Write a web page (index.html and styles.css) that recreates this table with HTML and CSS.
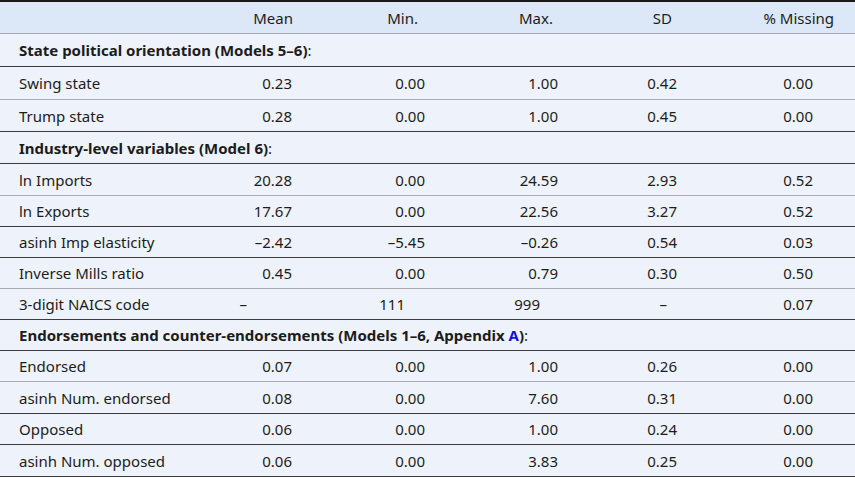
FILE: index.html
```html
<!DOCTYPE html>
<html>
<head>
<meta charset="utf-8">
<link rel="stylesheet" href="styles.css">
</head>
<body>
<div class="table">
  <div class="row head h32 gray">
    <div class="cell label"></div>
    <div class="cell hm">Mean</div>
    <div class="cell hmin">Min.</div>
    <div class="cell hmax">Max.</div>
    <div class="cell hsd">SD</div>
    <div class="cell hmiss">% Missing</div>
  </div>
  <div class="row group h33 dark">
    <div class="cell label span"><b>State political orientation (Models 5–6)</b>:</div>
  </div>
  <div class="row h33 gray">
    <div class="cell label">Swing state</div>
    <div class="cell m">0.23</div><div class="cell mn">0.00</div><div class="cell mx">1.00</div><div class="cell sd">0.42</div><div class="cell ms">0.00</div>
  </div>
  <div class="row h32 dark">
    <div class="cell label">Trump state</div>
    <div class="cell m">0.28</div><div class="cell mn">0.00</div><div class="cell mx">1.00</div><div class="cell sd">0.45</div><div class="cell ms">0.00</div>
  </div>
  <div class="row group h32 dark">
    <div class="cell label span"><b>Industry-level variables (Model 6)</b>:</div>
  </div>
  <div class="row h32 gray">
    <div class="cell label">ln Imports</div>
    <div class="cell m">20.28</div><div class="cell mn">0.00</div><div class="cell mx">24.59</div><div class="cell sd">2.93</div><div class="cell ms">0.52</div>
  </div>
  <div class="row h31 dark">
    <div class="cell label">ln Exports</div>
    <div class="cell m">17.67</div><div class="cell mn">0.00</div><div class="cell mx">22.56</div><div class="cell sd">3.27</div><div class="cell ms">0.52</div>
  </div>
  <div class="row h31 dark">
    <div class="cell label">asinh Imp elasticity</div>
    <div class="cell m">–2.42</div><div class="cell mn">–5.45</div><div class="cell mx">–0.26</div><div class="cell sd">0.54</div><div class="cell ms">0.03</div>
  </div>
  <div class="row h31 gray">
    <div class="cell label">Inverse Mills ratio</div>
    <div class="cell m">0.45</div><div class="cell mn">0.00</div><div class="cell mx">0.79</div><div class="cell sd">0.30</div><div class="cell ms">0.50</div>
  </div>
  <div class="row h31 dark">
    <div class="cell label">3-digit NAICS code</div>
    <div class="cell m dash-m">–</div><div class="cell mn int-mn">111</div><div class="cell mx int-mx">999</div><div class="cell sd dash-sd">–</div><div class="cell ms">0.07</div>
  </div>
  <div class="row group h31 dark">
    <div class="cell label span"><b>Endorsements and counter-endorsements (Models 1–6, Appendix <span class="link">A</span>)</b>:</div>
  </div>
  <div class="row h31 gray">
    <div class="cell label">Endorsed</div>
    <div class="cell m">0.07</div><div class="cell mn">0.00</div><div class="cell mx">1.00</div><div class="cell sd">0.26</div><div class="cell ms">0.00</div>
  </div>
  <div class="row h32 dark">
    <div class="cell label">asinh Num. endorsed</div>
    <div class="cell m">0.08</div><div class="cell mn">0.00</div><div class="cell mx">7.60</div><div class="cell sd">0.31</div><div class="cell ms">0.00</div>
  </div>
  <div class="row h31 dark">
    <div class="cell label">Opposed</div>
    <div class="cell m">0.06</div><div class="cell mn">0.00</div><div class="cell mx">1.00</div><div class="cell sd">0.24</div><div class="cell ms">0.00</div>
  </div>
  <div class="row h32 dark">
    <div class="cell label">asinh Num. opposed</div>
    <div class="cell m">0.06</div><div class="cell mn">0.00</div><div class="cell mx">3.83</div><div class="cell sd">0.25</div><div class="cell ms">0.00</div>
  </div>
</div>
</body>
</html>
```

FILE: styles.css
```css
html, body {
  margin: 0;
  padding: 0;
  background: #ffffff;
}
body {
  font-family: "Noto Sans", "DejaVu Sans", sans-serif;
  font-size: 15px;
  color: #1c1c1c;
  width: 855px;
  height: 478px;
  overflow: hidden;
}
.table {
  border-top: 2px solid #1a1a1a;
  background: #eef3fb;
}
.row {
  display: grid;
  grid-template-columns: 205px 105px 130px 130px 125px 160px;
  align-items: center;
  box-sizing: border-box;
  border-bottom: 1px solid #3c3c3c;
}
.row.gray { border-bottom-color: #a9abb0; }
.row.dark { border-bottom-color: #3c3c3c; }
.h31 { height: 31px; }
.h32 { height: 32px; }
.h33 { height: 33px; }
.head { background: #dce8f7; }
.cell {
  white-space: nowrap;
  text-align: right;
  line-height: 20px;
}
.label {
  text-align: left;
  padding-left: 19px;
}
.span { grid-column: 1 / -1; }
.group b { font-weight: 700; }
.link { color: #1010e6; }

.hm { padding-right: 17px; }
.hmin { padding-right: 22px; }
.hmax { padding-right: 17px; }
.hsd { padding-right: 23px; }
.hmiss { padding-right: 21px; }

.m { padding-right: 18px; }
.mn { padding-right: 15px; }
.mx { padding-right: 12px; }
.sd { padding-right: 18px; }
.ms { padding-right: 42px; }

.dash-m { padding-right: 63px; }
.int-mn { padding-right: 35px; }
.int-mx { padding-right: 30px; }
.dash-sd { padding-right: 28px; }
```
